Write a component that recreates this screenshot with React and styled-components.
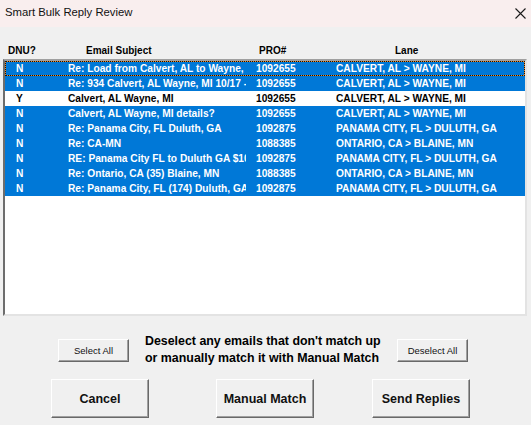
import React from 'react'
import styled, { createGlobalStyle } from 'styled-components'

const rows = [
  { dnu: 'N', subject: 'Re: Load from Calvert, AL to Wayne, MI 10/17', pro: '1092655', lane: 'CALVERT, AL > WAYNE, MI', selected: true, focused: true },
  { dnu: 'N', subject: 'Re: 934 Calvert, AL Wayne, MI 10/17 - 10/18', pro: '1092655', lane: 'CALVERT, AL > WAYNE, MI', selected: true },
  { dnu: 'Y', subject: 'Calvert, AL Wayne, MI', pro: '1092655', lane: 'CALVERT, AL > WAYNE, MI', selected: false },
  { dnu: 'N', subject: 'Calvert, AL Wayne, MI details?', pro: '1092655', lane: 'CALVERT, AL > WAYNE, MI', selected: true },
  { dnu: 'N', subject: 'Re: Panama City, FL Duluth, GA', pro: '1092875', lane: 'PANAMA CITY, FL > DULUTH, GA', selected: true },
  { dnu: 'N', subject: 'Re: CA-MN', pro: '1088385', lane: 'ONTARIO, CA > BLAINE, MN', selected: true },
  { dnu: 'N', subject: 'RE: Panama City FL to Duluth GA  $1000', pro: '1092875', lane: 'PANAMA CITY, FL > DULUTH, GA', selected: true },
  { dnu: 'N', subject: 'Re: Ontario, CA (35) Blaine, MN', pro: '1088385', lane: 'ONTARIO, CA > BLAINE, MN', selected: true },
  { dnu: 'N', subject: 'Re: Panama City, FL (174) Duluth, GA', pro: '1092875', lane: 'PANAMA CITY, FL > DULUTH, GA', selected: true },
]

const App = () => (
  <Window>
    <GlobalStyle />
    <TitleBar>
      <Title>Smart Bulk Reply Review</Title>
      <CloseIcon width="11" height="11" viewBox="0 0 11 11">
        <path d="M0.5 0.5 L10.5 10.5 M10.5 0.5 L0.5 10.5" stroke="#1a1a1a" strokeWidth="1.1" fill="none" />
      </CloseIcon>
    </TitleBar>

    <ColumnHeader>
      <span>DNU?</span>
      <span>Email Subject</span>
      <span>PRO#</span>
      <span>Lane</span>
    </ColumnHeader>

    <ListBox>
      {rows.map((r, i) => (
        <Row key={i} $selected={r.selected} $focused={r.focused}>
          <Cell $pad={11}>{r.dnu}</Cell>
          <Cell>{r.subject}</Cell>
          <Cell>{r.pro}</Cell>
          <Cell>{r.lane}</Cell>
        </Row>
      ))}
    </ListBox>

    <ControlsRow>
      <SmallButton>Select All</SmallButton>
      <Hint>
        Deselect any emails that don't match up
        <br />
        or manually match it with Manual Match
      </Hint>
      <SmallButton>Deselect All</SmallButton>
    </ControlsRow>

    <ActionRow>
      <BigButton $ml={51}>Cancel</BigButton>
      <BigButton $ml={67}>Manual Match</BigButton>
      <BigButton $ml={58}>Send Replies</BigButton>
    </ActionRow>
  </Window>
)

const GlobalStyle = createGlobalStyle`
  html, body {
    margin: 0;
    padding: 0;
    background: #f0f0f0;
    overflow: hidden;
  }
  * {
    box-sizing: border-box;
  }
`

const Window = styled.div`
  display: flex;
  flex-direction: column;
  width: 531px;
  height: 425px;
  background: #f0f0f0;
  font-family: 'Liberation Sans', Arial, sans-serif;
  color: #000;
`

const TitleBar = styled.div`
  display: flex;
  align-items: center;
  justify-content: space-between;
  height: 27px;
  padding: 0 5px 3px 5px;
  background: #f9eeee;
`

const Title = styled.span`
  font-size: 11.3px;
  color: #111;
`

const CloseIcon = styled.svg`
  display: block;
  margin-top: 2px;
`

const ColumnHeader = styled.div`
  display: grid;
  grid-template-columns: 78px 173px 136px 1fr;
  align-items: end;
  height: 32px;
  padding: 0 0 3px 8px;
  font-size: 10px;
  font-weight: 700;
`

const ListBox = styled.div`
  display: flex;
  flex-direction: column;
  height: 257px;
  margin: 0 4px 0 3px;
  background: #fff;
  border-style: solid;
  border-width: 2px;
  border-color: #a0a0a0 #e3e3e3 #e3e3e3 #6d6d6d;
`

const Row = styled.div`
  position: relative;
  display: grid;
  grid-template-columns: 63px 188px 80px 1fr;
  align-items: center;
  height: 15px;
  flex-shrink: 0;
  font-size: 10.2px;
  font-weight: 700;
  background: ${(p) => (p.$selected ? '#0078d7' : '#fff')};
  color: ${(p) => (p.$selected ? '#fff' : '#000')};

  &::before,
  &::after {
    content: '';
    display: ${(p) => (p.$focused ? 'block' : 'none')};
    position: absolute;
    inset: 0;
    pointer-events: none;
  }
  &::before {
    border: 1px solid #f08a24;
  }
  &::after {
    border: 1px dotted #111;
  }
`

const Cell = styled.span`
  min-width: 0;
  margin-right: 10px;
  padding-left: ${(p) => p.$pad || 0}px;
  white-space: nowrap;
  overflow: hidden;
`

const ControlsRow = styled.div`
  display: flex;
  align-items: center;
  height: 34px;
  margin-top: 17px;
  padding-left: 58px;
`

const SmallButton = styled.button`
  width: 71px;
  height: 23px;
  padding: 0;
  font-family: 'Liberation Sans', Arial, sans-serif;
  font-size: 9.5px;
  color: #111;
  background: #f0f0f0;
  border: 1px solid;
  border-color: #fff #696969 #696969 #fff;
  box-shadow: inset -1px -1px #a0a0a0;
`

const Hint = styled.div`
  width: 238px;
  margin: 0 14px 0 16px;
  font-size: 12.4px;
  font-weight: 700;
  line-height: 17px;
  white-space: nowrap;
`

const ActionRow = styled.div`
  display: flex;
  margin-top: 12px;
`

const BigButton = styled(SmallButton)`
  width: 98px;
  height: 39px;
  margin-left: ${(p) => p.$ml}px;
  font-size: 12.5px;
  font-weight: 700;
`

export default App
